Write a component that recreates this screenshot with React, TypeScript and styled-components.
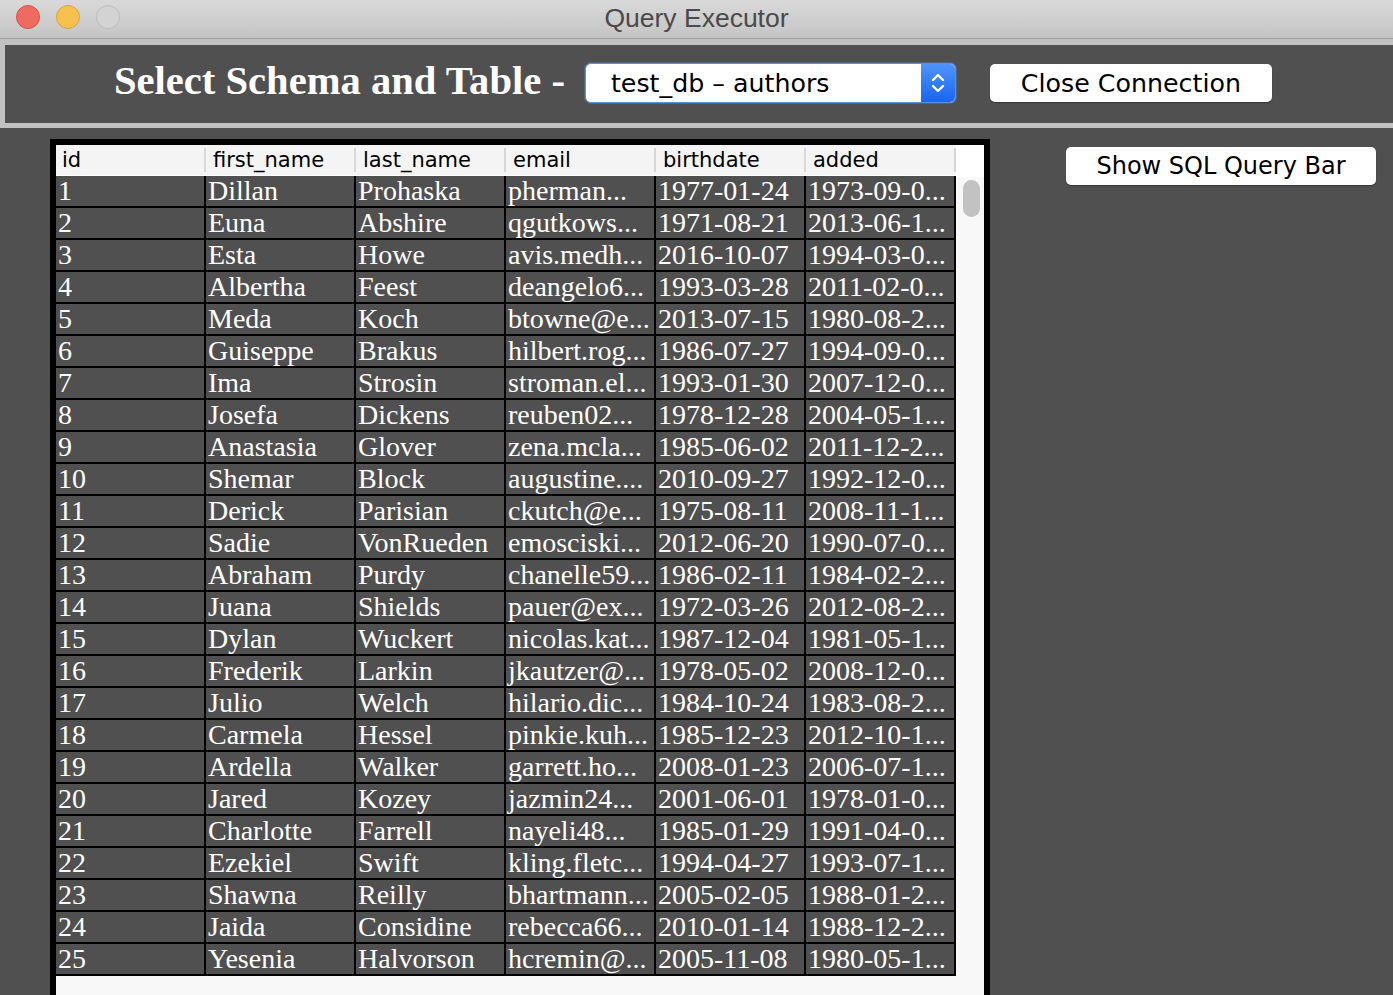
import React from "react";
import styled, { createGlobalStyle } from "styled-components";

const GlobalStyle = createGlobalStyle`
  html, body { margin: 0; padding: 0; background: #505050; overflow: hidden; }
  * { box-sizing: border-box; }
`;

const Window = styled.div`
  width: 1393px;
  height: 995px;
  display: flex;
  flex-direction: column;
  background: #c2c2c2;
  overflow: hidden;
`;

const TitleBar = styled.div`
  height: 39px;
  flex: none;
  position: relative;
  display: flex;
  align-items: center;
  justify-content: center;
  background: linear-gradient(#d9d9d9, #c4c4c4);
  border-bottom: 1px solid #a2a2a2;
`;

const Lights = styled.div`
  position: absolute;
  left: 16px;
  top: 5px;
  display: flex;
  gap: 16px;
`;

const Light = styled.span<{ $c: string; $b: string }>`
  width: 24px;
  height: 24px;
  border-radius: 50%;
  background: ${(p) => p.$c};
  border: 1px solid ${(p) => p.$b};
`;

const Title = styled.div`
  font-family: "Liberation Sans", Arial, sans-serif;
  font-size: 26.5px;
  color: #4a4a4a;
  margin-top: -2px;
`;

const HeaderPanel = styled.div`
  height: 78px;
  flex: none;
  margin: 6px 0 5px 5px;
  background: #505050;
  display: flex;
  align-items: center;
  padding-left: 109px;
`;

const Heading = styled.h1`
  margin: -6px 20px 0 0;
  font-family: "Liberation Serif", "Times New Roman", serif;
  font-weight: bold;
  font-size: 40.6px;
  color: #ffffff;
  line-height: 1;
`;

const Select = styled.div`
  width: 371px;
  height: 40px;
  display: flex;
  border: 1px solid #5c8fd8;
  border-radius: 6px;
  background: #fff;
  overflow: hidden;
  box-shadow: 0 0 0 1px rgba(90, 140, 220, 0.35);
  margin-top: -2px;
`;

const SelectText = styled.div`
  flex: 1;
  font-family: "DejaVu Sans", Verdana, sans-serif;
  font-size: 25.3px;
  color: #000;
  display: flex;
  align-items: center;
  padding-left: 25px;
`;

const SelectArrow = styled.div`
  width: 34px;
  background: linear-gradient(#4f93fb, #1766f2);
  display: flex;
  align-items: center;
  justify-content: center;
`;

const Button = styled.button<{ $w: number; $fs: number }>`
  width: ${(p) => p.$w}px;
  height: 38px;
  background: #fff;
  border: none;
  border-radius: 5px;
  box-shadow: 0 1px 1px rgba(0, 0, 0, 0.35);
  font-family: "DejaVu Sans", Verdana, sans-serif;
  font-size: ${(p) => p.$fs}px;
  color: #000;
  padding: 0;
  cursor: default;
`;

const HeaderButton = styled(Button)`
  margin-left: 34px;
  margin-top: -2px;
`;

const Body = styled.div`
  flex: 1;
  background: #505050;
  display: flex;
  align-items: flex-start;
  padding: 11px 0 0 50px;
  gap: 76px;
  min-height: 0;
`;

const Frame = styled.div`
  width: 940px;
  height: 900px;
  border: 6px solid #000;
  border-bottom: none;
  background: #f8f8f8;
  display: flex;
`;

const TableArea = styled.div`
  width: 900px;
  display: flex;
  flex-direction: column;
`;

const HeadRow = styled.div`
  height: 31px;
  display: grid;
  grid-template-columns: repeat(6, 150px);
  background: #f4f4f4;
  border-bottom: 1px solid #ffffff;
`;

const HeadCell = styled.div<{ $first?: boolean }>`
  position: relative;
  font-family: "DejaVu Sans", Verdana, sans-serif;
  font-size: 21px;
  color: #000;
  padding-left: ${(p) => (p.$first ? 6 : 7)}px;
  line-height: 30px;
  &::after {
    content: "";
    position: absolute;
    right: 0;
    top: 3px;
    bottom: 3px;
    width: 2px;
    background: #d6d6d6;
  }
`;

const Grid = styled.div`
  display: grid;
  grid-template-columns: repeat(6, 148px);
  grid-auto-rows: 30px;
  gap: 2px;
  background: #000;
  padding: 0 2px 2px 0;
  width: 900px;
`;

const Cell = styled.div`
  background: #505050;
  color: #fff;
  font-family: "Liberation Serif", "Times New Roman", serif;
  font-size: 28px;
  line-height: 29px;
  padding-left: 2px;
  white-space: nowrap;
`;

const ScrollStrip = styled.div`
  width: 28px;
  display: flex;
  flex-direction: column;
`;

const ScrollCorner = styled.div`
  height: 32px;
  background: #fff;
`;

const ScrollTrack = styled.div`
  flex: 1;
  background: #f8f8f8;
  padding: 3px 0 0 7px;
`;

const Thumb = styled.div`
  width: 17px;
  height: 37px;
  border-radius: 9px;
  background: #c2c2c2;
`;

const SideColumn = styled.div`
  padding-top: 8px;
`;

const rows: string[][] = [
  ["1", "Dillan", "Prohaska", "pherman...", "1977-01-24", "1973-09-0..."],
  ["2", "Euna", "Abshire", "qgutkows...", "1971-08-21", "2013-06-1..."],
  ["3", "Esta", "Howe", "avis.medh...", "2016-10-07", "1994-03-0..."],
  ["4", "Albertha", "Feest", "deangelo6...", "1993-03-28", "2011-02-0..."],
  ["5", "Meda", "Koch", "btowne@e...", "2013-07-15", "1980-08-2..."],
  ["6", "Guiseppe", "Brakus", "hilbert.rog...", "1986-07-27", "1994-09-0..."],
  ["7", "Ima", "Strosin", "stroman.el...", "1993-01-30", "2007-12-0..."],
  ["8", "Josefa", "Dickens", "reuben02...", "1978-12-28", "2004-05-1..."],
  ["9", "Anastasia", "Glover", "zena.mcla...", "1985-06-02", "2011-12-2..."],
  ["10", "Shemar", "Block", "augustine....", "2010-09-27", "1992-12-0..."],
  ["11", "Derick", "Parisian", "ckutch@e...", "1975-08-11", "2008-11-1..."],
  ["12", "Sadie", "VonRueden", "emosciski...", "2012-06-20", "1990-07-0..."],
  ["13", "Abraham", "Purdy", "chanelle59...", "1986-02-11", "1984-02-2..."],
  ["14", "Juana", "Shields", "pauer@ex...", "1972-03-26", "2012-08-2..."],
  ["15", "Dylan", "Wuckert", "nicolas.kat...", "1987-12-04", "1981-05-1..."],
  ["16", "Frederik", "Larkin", "jkautzer@...", "1978-05-02", "2008-12-0..."],
  ["17", "Julio", "Welch", "hilario.dic...", "1984-10-24", "1983-08-2..."],
  ["18", "Carmela", "Hessel", "pinkie.kuh...", "1985-12-23", "2012-10-1..."],
  ["19", "Ardella", "Walker", "garrett.ho...", "2008-01-23", "2006-07-1..."],
  ["20", "Jared", "Kozey", "jazmin24...", "2001-06-01", "1978-01-0..."],
  ["21", "Charlotte", "Farrell", "nayeli48...", "1985-01-29", "1991-04-0..."],
  ["22", "Ezekiel", "Swift", "kling.fletc...", "1994-04-27", "1993-07-1..."],
  ["23", "Shawna", "Reilly", "bhartmann...", "2005-02-05", "1988-01-2..."],
  ["24", "Jaida", "Considine", "rebecca66...", "2010-01-14", "1988-12-2..."],
  ["25", "Yesenia", "Halvorson", "hcremin@...", "2005-11-08", "1980-05-1..."],
];

const columns = ["id", "first_name", "last_name", "email", "birthdate", "added"];

export default function App() {
  return (
    <>
      <GlobalStyle />
      <Window>
        <TitleBar>
          <Lights>
            <Light $c="#ee6b60" $b="#d5534a" />
            <Light $c="#f6c14f" $b="#daa53c" />
            <Light $c="#d3d3d3" $b="#bcbcbc" />
          </Lights>
          <Title>Query Executor</Title>
        </TitleBar>
        <HeaderPanel>
          <Heading>Select Schema and Table -</Heading>
          <Select>
            <SelectText>test_db – authors</SelectText>
            <SelectArrow>
              <svg width="16" height="26" viewBox="0 0 16 26">
                <path d="M3 10 L8 5 L13 10" stroke="#fff" strokeWidth="2.4" fill="none" strokeLinecap="round" strokeLinejoin="round" />
                <path d="M3 16 L8 21 L13 16" stroke="#fff" strokeWidth="2.4" fill="none" strokeLinecap="round" strokeLinejoin="round" />
              </svg>
            </SelectArrow>
          </Select>
          <HeaderButton $w={282} $fs={25.3}>Close Connection</HeaderButton>
        </HeaderPanel>
        <Body>
          <Frame>
            <TableArea>
              <HeadRow>
                {columns.map((c, i) => (
                  <HeadCell key={c} $first={i === 0}>{c}</HeadCell>
                ))}
              </HeadRow>
              <Grid>
                {rows.map((r) =>
                  r.map((v, j) => <Cell key={r[0] + "-" + j}>{v}</Cell>)
                )}
              </Grid>
            </TableArea>
            <ScrollStrip>
              <ScrollCorner />
              <ScrollTrack>
                <Thumb />
              </ScrollTrack>
            </ScrollStrip>
          </Frame>
          <SideColumn>
            <Button $w={310} $fs={24}>Show SQL Query Bar</Button>
          </SideColumn>
        </Body>
      </Window>
    </>
  );
}
